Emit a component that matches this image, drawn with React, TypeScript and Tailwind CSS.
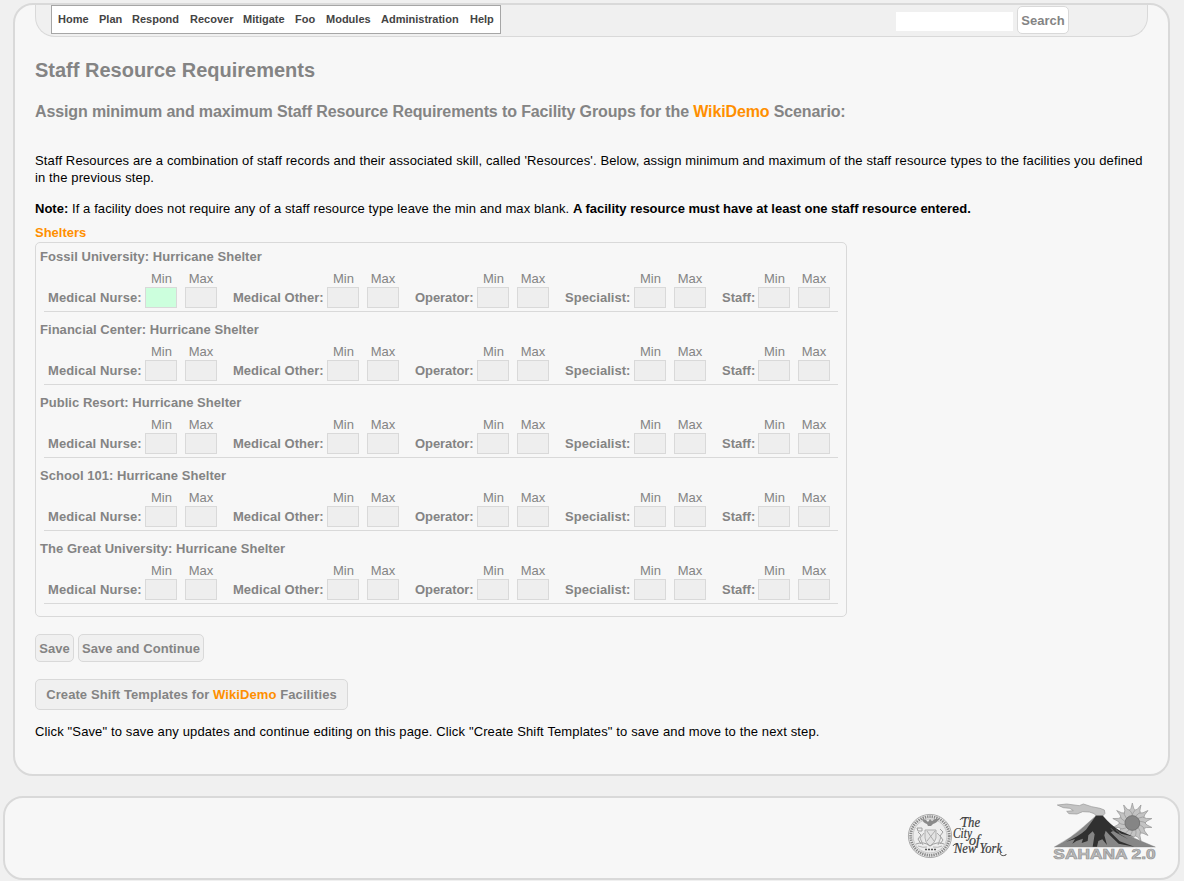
const menu = [
  { label: 'Home', width: 'w-[41px]' },
  { label: 'Plan', width: 'w-[33px]' },
  { label: 'Respond', width: 'w-[58px]' },
  { label: 'Recover', width: 'w-[53px]' },
  { label: 'Mitigate', width: 'w-[52px]' },
  { label: 'Foo', width: 'w-[31px]' },
  { label: 'Modules', width: 'w-[55px]' },
  { label: 'Administration', width: 'w-[89px]' },
  { label: 'Help', width: 'w-[26px]' },
];

const facilities = ['Fossil University', 'Financial Center', 'Public Resort', 'School 101', 'The Great University'];

const resources = [
  { label: 'Medical Nurse:', width: 'w-[97px] tracking-[0.09px]' },
  { label: 'Medical Other:', width: 'w-[94px] tracking-[0.03px]' },
  { label: 'Operator:', width: 'w-[62px] tracking-[-0.08px]' },
  { label: 'Specialist:', width: 'w-[69px] tracking-[0.04px]' },
  { label: 'Staff:', width: 'w-[36px]' },
];

function Field({ name, active }: { name: string; active?: boolean }) {
  return (
    <label className="flex w-8 flex-col items-center">
      <span className={`h-4 leading-4 ${name === 'Min' ? 'pl-px' : ''}`}>{name}</span>
      <input className={`block h-[21px] w-8 border border-[#d9d9d9] outline-none ${active ? 'bg-[#ccffdd]' : 'bg-[#eeeeee]'}`} />
    </label>
  );
}

function Facility({ name, first }: { name: string; first: boolean }) {
  return (
    <section className="h-[73px]">
      <h4 className="ml-1 h-7 pt-[6px] font-bold leading-4 tracking-[0.04px]">{name}: Hurricane Shelter</h4>
      <div className="ml-2 flex h-[41px] w-[794px] gap-4 border-b border-[#d9d9d9] pl-1">
        {resources.map((r, i) => (
          <div key={r.label} className="flex">
            <span className={`${r.width} whitespace-nowrap pt-[19px] font-bold leading-4`}>{r.label}</span>
            <div className="flex gap-2">
              <Field name="Min" active={first && i === 0} />
              <Field name="Max" />
            </div>
          </div>
        ))}
      </div>
    </section>
  );
}

function CityLogo() {
  return (
    <svg className="h-[50px] w-[102px]" viewBox="0 0 102 50" fill="none">
      <circle cx="24" cy="26" r="21.6" fill="#eeeeee" stroke="#999" strokeWidth=".8" />
      <circle cx="24" cy="26" r="19.3" stroke="#8a8a8a" strokeWidth="2.8" strokeDasharray="1.4 .9" />
      <circle cx="24" cy="26" r="17" fill="#ededed" stroke="#aaa" strokeWidth=".6" />
      <path d="M16 9q4 0 6 3l2-3 2 2q3-3 7-2-2 4-6 5l-2 2h-3l-1-2q-4-1-5-5z" fill="#8a8a8a" />
      <path d="M19 20h11v8q-1 5-6 8-5-3-5-8zM21 21l7 10M29 21l-8 10M18 23l-4 5 3 7M31 23l4 4-3 8" fill="#e3e3e3" stroke="#a6a6a6" strokeWidth=".9" />
      <path d="M11 18h5v3h-4zM12 22l3 3-3 4 3 5m19-15 3 3-3 4 3 4-3 4M10 34q8-3 14 2 7-5 14-2" stroke="#a0a0a0" />
      <path d="M12 36q5 2 9 1m6 0q5 1 9-1" stroke="#b4b4b4" />
      <path d="M19 39.5h2m1 0h2m1 0h2m1 0h2" stroke="#555" strokeWidth="1.5" />
      <g fill="#383838" fontFamily="Liberation Serif, serif" fontStyle="italic" stroke="#383838" strokeWidth=".2">
        <text x="55" y="17" fontSize="14.5" textLength="19" lengthAdjust="spacingAndGlyphs">The</text>
        <text x="47" y="28" fontSize="14.5" textLength="19" lengthAdjust="spacingAndGlyphs">City</text>
        <text x="63" y="34.5" fontSize="14" textLength="11" lengthAdjust="spacingAndGlyphs">of</text>
        <text x="48" y="43" fontSize="14.5" textLength="48" lengthAdjust="spacingAndGlyphs">New York</text>
      </g>
      <path d="M54 10q1-3 7-2M47 36q0-2 4-2M94 43q1 4 6 2v-1" stroke="#444" strokeWidth=".9" />
    </svg>
  );
}

function SahanaLogo() {
  const petals = Array.from({ length: 14 }, (_, i) => i * (360 / 14));
  return (
    <svg className="h-[60px] w-[106px]" viewBox="9 9 318 180">
      <g fill="#c3c3c3" stroke="#969696" strokeWidth="2">
        {petals.map((angle) => (
          <path key={angle} d="M237 52Q233 36 243 28L247 12L251 28Q261 36 257 52z" transform={`rotate(${angle} 247 72)`} />
        ))}
        <path d="M22 18L50 15l38 5 12-5 25 8 25 5 13 5 2 10-7 8h-20l-5-7-15-5-20-1-17 7-24-1-7-7 20-2-10-7-20-2z" />
      </g>
      <circle cx="247" cy="72" r="22" fill="#858585" stroke="#747474" strokeWidth="3" />
      <path d="M13 144Q65 116 101 83L138 50h20q31 38 72 58 43 18 86 36z" fill="#868686" stroke="#777" />
      <path d="M138 50h20q23 28 53 46l42 18-48-12 30 19-46-25-7 4 27 27 44 16-47-9-25-24-14-15-4 14 8 29-14-17-12 5-4 17h-13l6-37-6-9-13 12-2 17-18 6 4-13-20 7-12 8 8-14-26 8q40-18 59-36z" fill="#303030" />
      <path d="M183 88l19 20M197 91l20 18" stroke="#868686" strokeWidth="2" />
      <text x="10" y="180" textLength="307" lengthAdjust="spacingAndGlyphs" fill="#bdbdbd" stroke="#989898" strokeWidth="2.2" fontFamily="Liberation Sans, sans-serif" fontWeight="bold" fontSize="42">SAHANA 2.0</text>
    </svg>
  );
}

export default function App() {
  const button = 'border border-[#d9d9d9] rounded-[5px] bg-[#f0f0f0] font-bold text-center whitespace-nowrap';
  return (
    <div className="h-[881px] w-[1184px] overflow-hidden bg-[#f0f0f0] pt-[3px] font-['Liberation_Sans',sans-serif] text-[13px] leading-[17px] text-[#848484]">
      <main className="ml-[13px] h-[773px] w-[1157px] rounded-[20px] border-2 border-[#d9d9d9] bg-[#f7f7f7] px-5">
        <header className="flex h-8 w-[1113px] rounded-b-[20px] border border-t-0 border-[#d9d9d9] bg-[#f0f0f0] pl-[15px]">
          <nav className="flex h-[29px] w-[450px] border border-[#a6a6a6] bg-white pl-[6px] pt-[5px] text-[11px] font-bold leading-[17px] text-[#444]">
            {menu.map((item) => (
              <a key={item.label} className={`${item.width} shrink-0 whitespace-nowrap`}>{item.label}</a>
            ))}
          </nav>
          <form className="ml-[395px] flex">
            <input className="mt-[7px] h-[19px] w-[117px] bg-white outline-none" />
            <button type="button" className="ml-1 mt-px h-7 w-[52px] rounded-[5px] border border-[#d9d9d9] bg-white font-bold">Search</button>
          </form>
        </header>
        <h2 className="mt-[21px] text-[20px] font-bold leading-6">Staff Resource Requirements</h2>
        <h3 className="mt-[20px] whitespace-nowrap text-[16px] font-bold leading-5 tracking-[-0.126px]">
          Assign minimum and maximum Staff Resource Requirements to Facility Groups for the <span className="text-[#ff8f00]">WikiDemo</span> Scenario:
        </h3>
        <p className="mt-[30px] whitespace-nowrap tracking-[0.126px] text-black">
          Staff Resources are a combination of staff records and their associated skill, called 'Resources'. Below, assign minimum and maximum of the staff resource types to the facilities you defined<br />in the previous step.
        </p>
        <p className="mt-[14px] whitespace-nowrap text-black"><b>Note:</b><span className="tracking-[0.104px]"> If a facility does not require any of a staff resource type leave the min and max blank. </span><b className="tracking-[-0.02px]">A facility resource must have at least one staff resource entered.</b></p>
        <h3 className="mt-[7px] font-bold text-[#ff8f00]">Shelters</h3>
        <div className="mt-px h-[375px] w-[812px] rounded-[5px] border border-[#d9d9d9]">
          {facilities.map((name, i) => <Facility key={name} name={name} first={i === 0} />)}
        </div>
        <div className="mt-[17px] flex gap-1">
          <button className={`${button} h-7 w-[39px]`}>Save</button>
          <button className={`${button} h-7 w-[126px] tracking-[0.06px]`}>Save and Continue</button>
        </div>
        <button className={`${button} mt-[17px] block h-[31px] w-[313px] tracking-[0.09px]`}>Create Shift Templates for <span className="text-[#ff8f00]">WikiDemo</span> Facilities</button>
        <p className="mt-[13px] whitespace-nowrap tracking-[0.133px] text-black">Click "Save" to save any updates and continue editing on this page. Click "Create Shift Templates" to save and move to the next step.</p>
      </main>
      <footer className="ml-[3px] mt-5 flex h-[84px] w-[1177px] rounded-[20px] border-2 border-[#d9d9d9] bg-[#f7f7f7] pl-[901px]">
        <div className="mt-[12px]"><CityLogo /></div>
        <div className="ml-[45px] mt-[4px]"><SahanaLogo /></div>
      </footer>
    </div>
  );
}
